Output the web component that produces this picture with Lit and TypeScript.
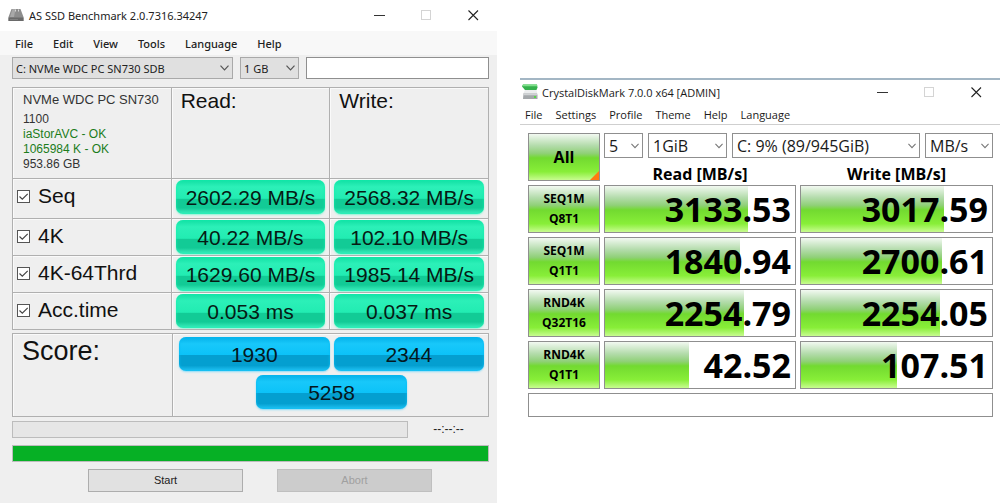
import { LitElement, html, css, svg } from "lit";
import { customElement } from "lit/decorators.js";

const chevron = html`<svg class="chev" viewBox="0 0 9 6" aria-hidden="true">
  <path d="M0.5 0.7 4.5 4.9 8.5 0.7" fill="none" stroke="currentColor" stroke-width="1.2" />
</svg>`;

const captionIcons = {
  Minimize: svg`<path d="M0 5.5H11" stroke="#333" />`,
  Maximize: svg`<rect x="0.5" y="0.5" width="9" height="9" fill="none" stroke="#d4d4d4" />`,
  Close: svg`<path d="M0.5 0.5 10 10M10 0.5 0.5 10" stroke="#222" stroke-width="1.1" />`,
};

const captionButtons = html`<div class="caption">
  ${Object.entries(captionIcons).map(
    ([name, icon]) => html`<button aria-label=${name} ?disabled=${name === "Maximize"}>
      <svg viewBox="0 0 11 11" width="11" height="11">${icon}</svg>
    </button>`
  )}
</div>`;

const shared = css`
  * {
    box-sizing: border-box;
  }
  button,
  select,
  input {
    font: inherit;
    color: inherit;
    margin: 0;
    padding: 0;
    border-radius: 0;
    appearance: none;
    outline: none;
  }
  .title {
    display: flex;
    align-items: center;
    background: #fff;
    white-space: nowrap;
  }
  .title h1 {
    flex: 1;
    margin: 0;
    font-size: 11px;
    font-weight: 400;
  }
  .caption {
    display: flex;
  }
  .caption button {
    width: 47px;
    height: 28px;
    border: 0;
    background: none;
    display: grid;
    place-items: center;
  }
  .menu {
    display: flex;
    align-items: center;
    font-size: 11px;
  }
  .menu button {
    border: 0;
    background: none;
  }
  .combo {
    display: grid;
    align-items: center;
    min-width: 0;
  }
  .combo > * {
    grid-area: 1 / 1;
  }
  .combo select {
    width: 100%;
    height: 100%;
    min-width: 0;
  }
  .chev {
    width: 9px;
    height: 6px;
    justify-self: end;
    pointer-events: none;
  }
`;

@customElement("ssd-window")
export class SsdWindow extends LitElement {
  static styles = [
    shared,
    css`
      :host {
        display: block;
        background: #efefef;
        color: #222;
        font-family: "Noto Sans", "Open Sans", sans-serif;
        min-height: 100vh;
      }
      .title {
        height: 31px;
        padding-left: 8px;
        gap: 5px;
      }
      .title .logo {
        width: 16px;
        height: 15px;
      }
      .menu {
        height: 24px;
        padding-left: 15px;
        gap: 20px;
        background: #f8f8f8;
        font-weight: 500;
      }
      .body {
        padding: 2px 8px 0 12px;
      }
      .tools {
        display: grid;
        grid-template-columns: 221fr 59fr 183fr;
        gap: 7px;
        height: 22px;
        margin-bottom: 8px;
        font-size: 11px;
      }
      .tools select {
        border: 1px solid #a9a9a9;
        background: #e0e0e0;
        padding: 0 18px 0 3px;
      }
      .tools .chev {
        margin-right: 4px;
        color: #555;
      }
      .tools input {
        width: 100%;
        min-width: 0;
        border: 1px solid #8f8f8f;
        background: #fff;
      }
      table {
        width: 100%;
        table-layout: fixed;
        border-collapse: collapse;
        font: 21px/26px "Liberation Sans", Arial, sans-serif;
        color: #111;
      }
      th,
      td {
        border: 1px solid #b0b0b0;
        box-shadow: inset 1px 1px #fafafa;
        padding: 1px 4px 0;
        vertical-align: top;
        text-align: left;
        font-weight: 400;
      }
      .head {
        height: 91px;
      }
      .head th {
        padding: 0 9px;
      }
      .head .drive {
        padding: 0 0 0 10px;
        font-size: 12px;
        line-height: 15px;
        color: #333;
      }
      .drive p {
        margin: 0;
      }
      .drive .name {
        font-size: 13px;
        line-height: 24px;
        white-space: nowrap;
      }
      .drive .ok {
        color: #1c7d1c;
      }
      .test {
        height: 37px;
      }
      .test:nth-child(1) {
        height: 40px;
      }
      .test label {
        display: flex;
        align-items: center;
        gap: 8px;
        height: 32px;
        white-space: nowrap;
      }
      .test input {
        width: 13px;
        height: 13px;
        border: 1px solid #555;
        background: #fff;
      }
      .test input:checked {
        background: #fff
          url("data:image/svg+xml,%3Csvg xmlns='http://www.w3.org/2000/svg' viewBox='0 0 11 11'%3E%3Cpath d='M1.5 5.5 4.3 8.2 9.7 2.8' fill='none' stroke='%23444' stroke-width='1.2'/%3E%3C/svg%3E");
      }
      .pill {
        height: 34px;
        line-height: 36px;
        border-radius: 7px;
        text-align: center;
        white-space: nowrap;
        color: #061a14;
        background: linear-gradient(#12e0a4, #2cf0b8 20%, #22ecb2 54%, #12cb96 56%, #12cb96 82%, #3ff0c0);
        box-shadow: inset 0 0 3px #10f0ae, 0 1px 2px #8ff5d6;
      }
      .pill.blue {
        color: #051820;
        background: linear-gradient(#04b0e8, #18c8fa 20%, #0cc2f8 52%, #049fd0 54%, #049fd0 84%, #22c4f4);
        box-shadow: inset 0 0 3px #08bcf4, 0 1px 2px #8adcf8;
      }
      .total {
        margin-top: 3px;
      }
      .total .label {
        width: 160px;
        padding: 1px 9px;
        font-size: 27px;
        line-height: 32px;
      }
      .total td {
        height: 83px;
        padding: 3px 4px 0 6px;
      }
      .scores {
        display: grid;
        grid-template-columns: repeat(4, 1fr);
        gap: 4px;
      }
      .scores .pill {
        grid-column: span 2;
      }
      .scores .pill.sum {
        grid-column: 2 / span 2;
      }
      .run {
        display: grid;
        grid-template-columns: 396fr 81fr;
        align-items: center;
        margin-top: 4px;
        font: 12px/17px "Liberation Sans", Arial, sans-serif;
        text-align: center;
      }
      .bar {
        height: 17px;
        border: 1px solid #bcbcbc;
        background: #e6e6e6;
      }
      .bar.full {
        margin-top: 7px;
        background: #06b025;
      }
      .actions {
        display: grid;
        grid-template-columns: 154fr 154fr;
        gap: 34px;
        padding: 7px 57px 0 76px;
        font: 11px/21px "Liberation Sans", Arial, sans-serif;
      }
      .actions button {
        height: 23px;
        border: 1px solid #adadad;
        background: #e1e1e1;
      }
      .actions button:disabled {
        border-color: #bfbfbf;
        background: #ccc;
        color: #a0a0a0;
      }
    `,
  ];

  private tests = [
    ["Seq", "2602.29 MB/s", "2568.32 MB/s"],
    ["4K", "40.22 MB/s", "102.10 MB/s"],
    ["4K-64Thrd", "1629.60 MB/s", "1985.14 MB/s"],
    ["Acc.time", "0.053 ms", "0.037 ms"],
  ];

  render() {
    return html`
      <header class="title">
        <svg class="logo" viewBox="0 0 16 15" aria-hidden="true">
          <path d="M3.5 1h9L15.500 9v4H0.500V9z" fill="#8d8d8d" />
          <path d="M4.500 1h3L6 9H2z" fill="#a8a8a8" />
          <path d="M0.500 9.500h15V13h-15z" fill="#6a6a6a" />
          <path d="M7.500 1.500v2M10.500 1.500v2" stroke="#d8d8d8" />
          <path d="M2 11.500h8" stroke="#808080" />
        </svg>
        <h1>AS SSD Benchmark 2.0.7316.34247</h1>
        ${captionButtons}
      </header>
      <nav class="menu">
        ${["File", "Edit", "View", "Tools", "Language", "Help"].map((m) => html`<button>${m}</button>`)}
      </nav>
      <div class="body">
        <div class="tools">
          <div class="combo">
            <select aria-label="Drive"><option>C: NVMe WDC PC SN730 SDB</option></select>${chevron}
          </div>
          <div class="combo">
            <select aria-label="Test size"><option>1 GB</option></select>${chevron}
          </div>
          <input type="text" aria-label="Comment" />
        </div>
        <table>
          <thead>
            <tr class="head">
              <th class="drive">
                <p class="name">NVMe WDC PC SN730</p>
                <p>1100</p>
                <p class="ok">iaStorAVC - OK</p>
                <p class="ok">1065984 K - OK</p>
                <p>953.86 GB</p>
              </th>
              <th scope="col">Read:</th>
              <th scope="col">Write:</th>
            </tr>
          </thead>
          <tbody>
            ${this.tests.map(
              ([name, read, write]) => html`<tr class="test">
                <th scope="row"><label><input type="checkbox" checked />${name}</label></th>
                <td><div class="pill">${read}</div></td>
                <td><div class="pill">${write}</div></td>
              </tr>`
            )}
          </tbody>
        </table>
        <table class="total">
          <tr>
            <th scope="row" class="label">Score:</th>
            <td>
              <div class="scores">
                <div class="pill blue">1930</div>
                <div class="pill blue">2344</div>
                <div class="pill blue sum">5258</div>
              </div>
            </td>
          </tr>
        </table>
        <div class="run">
          <div class="bar" role="progressbar" aria-label="Current test"></div>
          <span>--:--:--</span>
        </div>
        <div class="bar full" role="progressbar" aria-label="Overall" aria-valuenow="100"></div>
        <div class="actions">
          <button>Start</button>
          <button disabled>Abort</button>
        </div>
      </div>
    `;
  }
}

@customElement("disk-mark-window")
export class DiskMarkWindow extends LitElement {
  static styles = [
    shared,
    css`
      :host {
        display: block;
        background: #fff;
        border-top: 2px solid #a3b6c4;
        color: #1a1a1a;
        font-family: "Open Sans", "Noto Sans", sans-serif;
      }
      .title {
        height: 24px;
        padding-left: 2px;
        gap: 4px;
      }
      .title .logo {
        width: 16px;
        height: 16px;
      }
      .menu {
        height: 21px;
        padding-left: 5px;
        gap: 13px;
        border-bottom: 1px solid #cfcfcf;
      }
      .body {
        display: grid;
        grid-template-columns: 72fr 192fr 193fr;
        grid-auto-rows: 48px;
        gap: 4px;
        padding: 8px 7px 0 8px;
      }
      .green {
        background: linear-gradient(#f2f9f1, #b4dcac 25%, #90d078 42%, #72da30 52%, #88ee38 82%, #c8fc90);
      }
      .btn {
        border: 1px solid #8f8f8f;
        font-size: 12px;
        line-height: 20px;
        font-weight: 700;
        color: #000;
      }
      .btn.all {
        display: grid;
        font-size: 16px;
        align-items: center;
      }
      .btn.all > * {
        grid-area: 1 / 1;
      }
      .btn.all svg {
        place-self: end;
        width: 9px;
        height: 9px;
      }
      .top {
        grid-column: 2 / 4;
        display: grid;
        grid-template-rows: 25px 17px;
        gap: 6px;
      }
      .selects {
        display: grid;
        grid-template-columns: 39fr 79fr 188fr 68fr;
        gap: 5px;
        font-size: 16px;
      }
      .selects select {
        border: 1px solid #8f8f8f;
        background: #fff;
        padding: 0 0 0 4px;
      }
      .selects .chev {
        width: 8px;
        margin-right: 4px;
        color: #777;
      }
      .heads {
        display: grid;
        grid-template-columns: 192fr 193fr;
        gap: 4px;
        font-size: 16px;
        line-height: 20px;
        font-weight: 700;
        text-align: center;
        color: #000;
      }
      .cell {
        display: grid;
        grid-template-rows: 46px;
        border: 1px solid #8f8f8f;
      }
      .cell > * {
        grid-area: 1 / 1;
      }
      .cell .value {
        font-size: 34px;
        line-height: 46px;
        font-weight: 700;
        text-align: right;
        padding-right: 4px;
        color: #000;
      }
      .note {
        grid-column: 1 / 4;
        height: 24px;
        border: 1px solid #8f8f8f;
        background: #fff;
      }
    `,
  ];

  private rows = [
    { a: "SEQ1M", b: "Q8T1", cells: [["3133.53", 75], ["3017.59", 75]] },
    { a: "SEQ1M", b: "Q1T1", cells: [["1840.94", 71], ["2700.61", 74]] },
    { a: "RND4K", b: "Q32T16", cells: [["2254.79", 73], ["2254.05", 73]] },
    { a: "RND4K", b: "Q1T1", cells: [["42.52", 44], ["107.51", 50]] },
  ];

  private combo(label: string, value: string) {
    return html`<div class="combo">
      <select aria-label=${label}><option>${value}</option></select>${chevron}
    </div>`;
  }

  render() {
    return html`
      <header class="title">
        <svg class="logo" viewBox="0 0 16 16" aria-hidden="true">
          <path d="M0 2.500 1 0.500h14l0.500 3-1 2.500H3z" fill="#35b04c" />
          <path d="M1 0.500h14l0.300 1.800H0.200z" fill="#7fe08a" />
          <path d="M3 6h11.500l1 4H1z" fill="#eceeef" />
          <path d="M1.500 9.500h13.500l0.500 2v3.500H1z" fill="#a4a8ab" />
          <path d="M1.500 9.500h13.500l0.500 1.800H1z" fill="#d0d3d5" />
          <rect x="12" y="12" width="2" height="2" fill="#56d846" />
        </svg>
        <h1>CrystalDiskMark 7.0.0 x64 [ADMIN]</h1>
        ${captionButtons}
      </header>
      <nav class="menu">
        ${["File", "Settings", "Profile", "Theme", "Help", "Language"].map((m) => html`<button>${m}</button>`)}
      </nav>
      <div class="body">
        <button class="btn green all">
          <span>All</span>
          <svg viewBox="0 0 9 9" aria-hidden="true"><path d="M9 0V9H0z" fill="#ff7a10" /></svg>
        </button>
        <div class="top">
          <div class="selects">
            ${this.combo("Runs", "5")} ${this.combo("Size", "1GiB")}
            ${this.combo("Drive", "C: 9% (89/945GiB)")} ${this.combo("Unit", "MB/s")}
          </div>
          <div class="heads"><span>Read [MB/s]</span><span>Write [MB/s]</span></div>
        </div>
        ${this.rows.map(
          (r) => html`<button class="btn green">${r.a}<br />${r.b}</button>
            ${r.cells.map(
              ([value, pct]) => html`<div class="cell">
                <div class="green" style="width:${pct}%"></div>
                <div class="value">${value}</div>
              </div>`
            )}`
        )}
        <input class="note" type="text" aria-label="Comment" />
      </div>
    `;
  }
}

@customElement("app-root")
export class AppRoot extends LitElement {
  static styles = css`
    :host {
      display: grid;
      grid-template-columns: 497fr 480fr;
      gap: 23px;
      align-items: start;
      min-height: 100vh;
      background: #fff;
    }
    disk-mark-window {
      margin-top: 78px;
    }
  `;

  render() {
    return html`<ssd-window></ssd-window><disk-mark-window></disk-mark-window>`;
  }
}
